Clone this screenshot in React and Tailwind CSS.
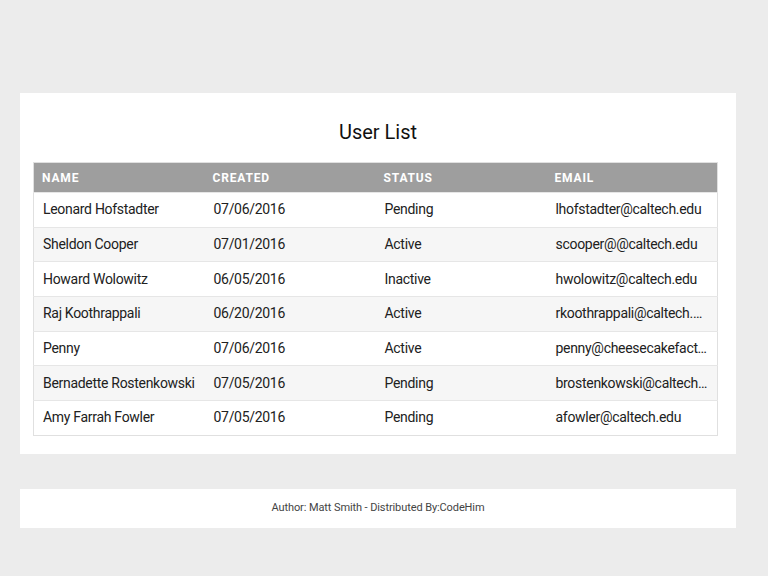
const users = [
  ['Leonard Hofstadter', '07/06/2016', 'Pending', 'lhofstadter@caltech.edu'],
  ['Sheldon Cooper', '07/01/2016', 'Active', 'scooper@@caltech.edu'],
  ['Howard Wolowitz', '06/05/2016', 'Inactive', 'hwolowitz@caltech.edu'],
  ['Raj Koothrappali', '06/20/2016', 'Active', 'rkoothrappali@caltech.edu'],
  ['Penny', '07/06/2016', 'Active', 'penny@cheesecakefactory.com'],
  ['Bernadette Rostenkowski', '07/05/2016', 'Pending', 'brostenkowski@caltech.edu'],
  ['Amy Farrah Fowler', '07/05/2016', 'Pending', 'afowler@caltech.edu'],
];

export default function App() {
  return (
    <div className="min-h-[576px] bg-[#ececec] pl-5 pr-8 pt-[93px] pb-12 font-['Roboto',sans-serif] text-[#212121]">
      {/* Card */}
      <div className="bg-white px-[13px] pt-[19px] pb-[18px]">
        <h1 className="text-center text-[20px] leading-[40px] mb-[10px] text-[#111]">User List</h1>
        <table className="w-[685px] table-fixed border-collapse border border-[#e0e0e0] text-[14px] tracking-[-0.3px]">
          <thead>
            <tr className="bg-[#9e9e9e] h-[30px] text-white text-[12px] font-bold uppercase tracking-[0.07em] text-left">
              <th className="px-[8px] font-bold">Name</th>
              <th className="px-[8px] font-bold">Created</th>
              <th className="px-[8px] font-bold">Status</th>
              <th className="px-[8px] font-bold">Email</th>
            </tr>
          </thead>
          <tbody>
            {users.map((u, i) => (
              <tr key={u[0]} className={`h-[34.7px] border-t border-[#e6e6e6] ${i % 2 ? 'bg-[#f6f6f6]' : 'bg-white'}`}>
                {u.map((c, j) => (
                  <td key={j} className="pl-[9px] pr-[8px] whitespace-nowrap overflow-hidden text-ellipsis">{c}</td>
                ))}
              </tr>
            ))}
          </tbody>
        </table>
      </div>

      {/* Footer */}
      <div className="bg-white mt-[35px] h-[39px] flex items-center justify-center text-[11px] text-[#444] tracking-[-0.1px]">
        Author: Matt Smith - Distributed By:CodeHim
      </div>
    </div>
  );
}
